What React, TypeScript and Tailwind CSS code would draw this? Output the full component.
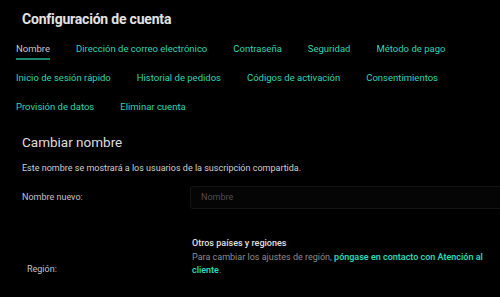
import React from "react";

const TABS = [
  ["Nombre", "Dirección de correo electrónico", "Contraseña", "Seguridad", "Método de pago"],
  ["Inicio de sesión rápido", "Historial de pedidos", "Códigos de activación", "Consentimientos"],
  ["Provisión de datos", "Eliminar cuenta"],
];

function Tab({ label, active }: { label: string; active?: boolean }) {
  return (
    <div className="relative">
      <span className={active ? "text-[#c8c8c8]" : "text-[#2fd6b5]"}>{label}</span>
      {active && <div className="absolute left-0 right-0 top-[16px] h-[2px] bg-[#16876f]" />}
    </div>
  );
}

export default function App() {
  return (
    <div
      className="h-[297px] w-[500px] overflow-hidden bg-black"
      style={{ fontFamily: "Roboto, 'Noto Sans', sans-serif" }}
    >
      <h1 className="pl-[22px] pt-[9px] text-[14px] font-bold leading-[20px] tracking-[-0.2px] text-[#e2e2e2]">
        Configuración de cuenta
      </h1>

      <div className="mt-[13px] flex flex-col gap-[15px] pl-[16px] text-[9.5px] leading-[14px]">
        {TABS.map((row, i) => (
          <div key={i} className="flex gap-[26px]">
            {row.map((t, j) => (
              <Tab key={t} label={t} active={i === 0 && j === 0} />
            ))}
          </div>
        ))}
      </div>

      <div className="pl-[22px]">
        <h2 className="mt-[19px] text-[13.5px] leading-[18px] text-[#dedede]">Cambiar nombre</h2>
        <p className="mt-[10px] text-[9px] leading-[14px] text-[#cfcfcf]">
          Este nombre se mostrará a los usuarios de la suscripción compartida.
        </p>

        <div className="mt-[11px] flex items-center">
          <span className="w-[168px] text-[9px] text-[#c4c4c4]">Nombre nuevo:</span>
          <div className="flex h-[23px] flex-1 items-center rounded-l-[3px] border border-r-0 border-[#141418] bg-[#050506] pl-[10px] text-[9px] text-[#4f4f4f]">
            Nombre
          </div>
        </div>

        <div className="mt-[28px] flex items-end">
          <span className="mb-[1px] w-[170px] pl-[5px] text-[9px] text-[#c4c4c4]">Región:</span>
          <div className="flex-1 pr-[6px] text-[9px] leading-[13.5px]">
            <p className="font-medium text-[#e0e0e0]">Otros países y regiones</p>
            <p className="text-[#8c8c8c]">
              Para cambiar los ajustes de región,{" "}
              <span className="font-medium text-[#2fe0c0]">
                póngase en contacto con Atención al cliente
              </span>
              .
            </p>
          </div>
        </div>
      </div>
    </div>
  );
}
